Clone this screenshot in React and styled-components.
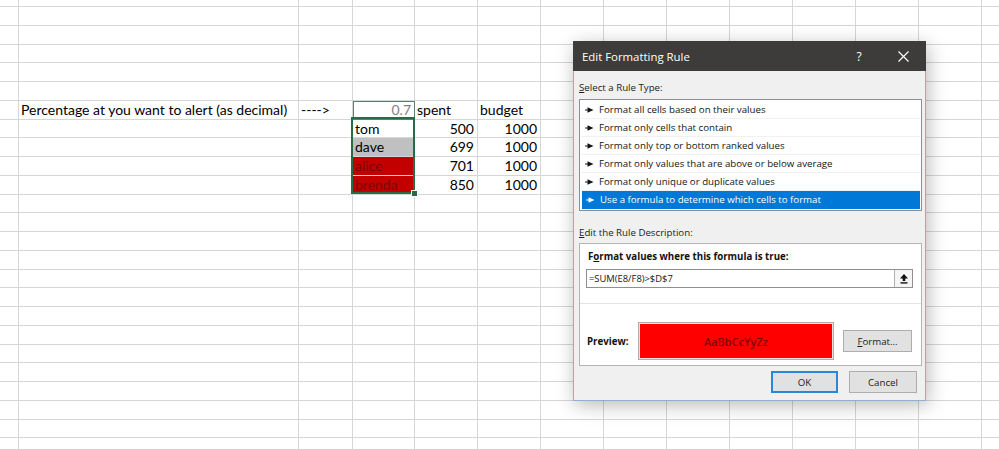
import styled, { createGlobalStyle } from "styled-components";

const COLS = [19, 280, 54, 62, 63, 63, 63, 63, 63, 63, 63, 63, 63, 63];
const ROW_H = 18.75;
const ROW_COUNT = 25;

const RED = { fill: "#c20000", color: "#800606" };

const content = {
  6: {
    1: { text: "Percentage at you want to alert (as decimal)" },
    2: { text: "---->" },
    3: { text: "0.7", align: "right", color: "#7f7f7f", outlined: true },
    4: { text: "spent" },
    5: { text: "budget" },
  },
  7: {
    3: { text: "tom" },
    4: { text: "500", align: "right" },
    5: { text: "1000", align: "right" },
  },
  8: {
    3: { text: "dave", fill: "#c0c0c0" },
    4: { text: "699", align: "right" },
    5: { text: "1000", align: "right" },
  },
  9: {
    3: { text: "alice", ...RED },
    4: { text: "701", align: "right" },
    5: { text: "1000", align: "right" },
  },
  10: {
    3: { text: "brenda", ...RED },
    4: { text: "850", align: "right" },
    5: { text: "1000", align: "right" },
  },
};

const ruleTypes = [
  "Format all cells based on their values",
  "Format only cells that contain",
  "Format only top or bottom ranked values",
  "Format only values that are above or below average",
  "Format only unique or duplicate values",
  "Use a formula to determine which cells to format",
];

const GlobalStyle = createGlobalStyle`
  html, body {
    margin: 0;
    padding: 0;
    background: #ffffff;
    overflow: hidden;
  }
`;

const Sheet = styled.div`
  position: relative;
  width: 999px;
  height: 449px;
  overflow: hidden;
  background: #ffffff;
  font-family: Lato, "Open Sans", sans-serif;
  font-size: 14px;
  color: #000000;
`;

const Row = styled.div`
  display: flex;
  height: ${(p) => p.$h}px;
`;

const Cell = styled.div`
  flex: none;
  box-sizing: border-box;
  width: ${(p) => p.$w}px;
  height: 100%;
  border-right: 1px solid #d6d6d6;
  border-bottom: 1px solid #d6d6d6;
  background: ${(p) => p.$fill || "transparent"};
  color: ${(p) => p.$color || "#000000"};
  text-align: ${(p) => p.$align || "left"};
  padding: 0 3px 0 2px;
  line-height: 17px;
  white-space: nowrap;
  overflow: visible;
  outline: ${(p) => (p.$outlined ? "1px solid #5f7f6e" : "none")};
  outline-offset: -1px;
`;

const Selection = styled.div`
  position: absolute;
  left: 351px;
  top: 117px;
  width: 64px;
  height: 77px;
  box-sizing: border-box;
  border: 2px solid #2a6b47;
  pointer-events: none;
`;

const FillHandle = styled.div`
  position: absolute;
  right: -5px;
  bottom: -5px;
  width: 5px;
  height: 5px;
  background: #2a6b47;
  border: 1px solid #ffffff;
`;

const Dialog = styled.div`
  position: absolute;
  left: 573px;
  top: 41px;
  width: 353px;
  height: 360px;
  box-sizing: border-box;
  display: flex;
  flex-direction: column;
  background: #f0f0f0;
  border: 1px solid #8eaed4;
  border-top: none;
  box-shadow: 2px 4px 18px rgba(0, 0, 0, 0.28);
  font-family: "Open Sans", "Noto Sans", sans-serif;
  font-size: 9.7px;
  color: #141414;
`;

const TitleBar = styled.div`
  display: flex;
  align-items: center;
  height: 30px;
  margin: 0 -1px;
  background: #3d3c3a;
  color: #ffffff;
`;

const Title = styled.div`
  flex: 1;
  padding-left: 9px;
  font-size: 11.4px;
`;

const TitleButton = styled.div`
  width: 46px;
  height: 100%;
  display: flex;
  align-items: center;
  justify-content: center;
  font-size: 12px;
  padding-left: ${(p) => p.$shift || 0}px;
  box-sizing: border-box;
`;

const Body = styled.div`
  display: flex;
  flex-direction: column;
  padding: 0 3px 0 5px;
`;

const Label = styled.div`
  line-height: 14px;
  margin-top: ${(p) => p.$top}px;
  color: #222222;
`;

const Key = styled.span`
  text-decoration: underline;
  text-underline-offset: 1px;
`;

const RuleList = styled.div`
  margin-top: 4px;
  height: 112px;
  box-sizing: border-box;
  border: 1px solid #8a8d93;
  padding: 1px;
  background: #ffffff;
`;

const RuleItem = styled.div`
  display: flex;
  align-items: center;
  height: 18px;
  box-sizing: border-box;
  padding-left: 4px;
  gap: 5px;
  margin-left: ${(p) => (p.$selected ? "1px" : "0")};
  background: ${(p) => (p.$selected ? "#0078d7" : "transparent")};
  color: ${(p) => (p.$selected ? "#ffffff" : "#141414")};
  border-bottom: 1px solid ${(p) => (p.$selected ? "#0078d7" : "#f1f1f1")};
`;

const DescBox = styled.div`
  margin-top: 3px;
  height: 123px;
  box-sizing: border-box;
  border: 1px solid #b4b4b4;
  background: #ffffff;
  display: flex;
  flex-direction: column;
`;

const DescTitle = styled.div`
  margin-top: 6px;
  padding-left: 8px;
  line-height: 14px;
  font-weight: 700;
  color: #111111;
`;

const FormulaInput = styled.div`
  display: flex;
  align-items: stretch;
  margin: 5px 8px 0 6px;
  height: 19px;
  box-sizing: border-box;
  border: 1px solid #8f8f8f;
  background: #ffffff;
`;

const FormulaText = styled.div`
  flex: 1;
  padding-left: 2px;
  line-height: 17px;
  font-size: 9.4px;
`;

const PickButton = styled.div`
  width: 18px;
  box-sizing: border-box;
  border-left: 1px solid #b0b0b0;
  background: #f5f5f5;
  display: flex;
  align-items: center;
  justify-content: center;
`;

const Divider = styled.div`
  margin-top: 15px;
  height: 1px;
  background: #e2e2e2;
`;

const PreviewRow = styled.div`
  display: flex;
  align-items: center;
  margin-top: 18px;
  padding-left: 7px;
`;

const PreviewLabel = styled.div`
  width: 51px;
  font-weight: 700;
  color: #111111;
`;

const PreviewSwatch = styled.div`
  width: 196px;
  height: 38px;
  box-sizing: border-box;
  border: 1px solid #b8a8a8;
  box-shadow: inset 0 0 0 1px #fbe0e0;
  background: #ff0000;
  color: #850000;
  display: flex;
  align-items: center;
  justify-content: center;
  font-size: 11px;
  font-weight: 600;
`;

const Button = styled.div`
  width: ${(p) => p.$w}px;
  height: 22px;
  box-sizing: border-box;
  display: flex;
  align-items: center;
  justify-content: center;
  background: #e1e1e1;
  border: ${(p) => (p.$primary ? "2px solid #2b86d8" : "1px solid #adadad")};
  color: #1a1a1a;
`;

const FormatButton = styled(Button)`
  margin-left: 9px;
`;

const ButtonRow = styled.div`
  display: flex;
  justify-content: flex-end;
  gap: 11px;
  margin-top: 5px;
  padding-right: 5px;
`;

function Arrow({ color }) {
  return (
    <svg width="9" height="6" viewBox="0 0 9 6">
      <line x1="0" y1="3" x2="3" y2="3" stroke={color} strokeWidth="1" />
      <polygon points="2.5,0.3 8.5,3 2.5,5.7" fill={color} />
    </svg>
  );
}

function CloseIcon() {
  return (
    <svg width="11" height="11" viewBox="0 0 11 11">
      <path d="M0.5 0.5 L10.5 10.5 M10.5 0.5 L0.5 10.5" stroke="#ffffff" strokeWidth="1.2" />
    </svg>
  );
}

function PickIcon() {
  return (
    <svg width="8" height="10" viewBox="0 0 8 10">
      <polygon points="4,0 8,4.5 5.3,4.5 5.3,7 2.7,7 2.7,4.5 0,4.5" fill="#111111" />
      <rect x="0.5" y="8.2" width="7" height="1.4" fill="#111111" />
    </svg>
  );
}

function Grid() {
  const rows = [];
  for (let r = 0; r < ROW_COUNT; r++) {
    const h = r === 0 ? 7 : ROW_H;
    const rowData = content[r] || {};
    rows.push(
      <Row key={r} $h={h}>
        {COLS.map((w, c) => {
          const cell = rowData[c];
          return (
            <Cell
              key={c}
              $w={w}
              $fill={cell?.fill}
              $color={cell?.color}
              $align={cell?.align}
              $outlined={cell?.outlined}
            >
              {cell?.text}
            </Cell>
          );
        })}
      </Row>
    );
  }
  return rows;
}

export default function App() {
  return (
    <>
      <GlobalStyle />
      <Sheet>
        <Grid />
        <Selection>
          <FillHandle />
        </Selection>

        <Dialog>
          <TitleBar>
            <Title>Edit Formatting Rule</Title>
            <TitleButton $shift={4}>?</TitleButton>
            <TitleButton>
              <CloseIcon />
            </TitleButton>
          </TitleBar>

          <Body>
            <Label $top={10}>
              <Key>S</Key>elect a Rule Type:
            </Label>
            <RuleList>
              {ruleTypes.map((t, i) => {
                const selected = i === ruleTypes.length - 1;
                return (
                  <RuleItem key={t} $selected={selected}>
                    <Arrow color={selected ? "#ffffff" : "#141414"} />
                    {t}
                  </RuleItem>
                );
              })}
            </RuleList>

            <Label $top={15}>
              <Key>E</Key>dit the Rule Description:
            </Label>
            <DescBox>
              <DescTitle>
                F<Key>o</Key>rmat values where this formula is true:
              </DescTitle>
              <FormulaInput>
                <FormulaText>=SUM(E8/F8)&gt;$D$7</FormulaText>
                <PickButton>
                  <PickIcon />
                </PickButton>
              </FormulaInput>
              <Divider />
              <PreviewRow>
                <PreviewLabel>Preview:</PreviewLabel>
                <PreviewSwatch>AaBbCcYyZz</PreviewSwatch>
                <FormatButton $w={69}>
                  <Key>F</Key>ormat...
                </FormatButton>
              </PreviewRow>
            </DescBox>

            <ButtonRow>
              <Button $w={67} $primary>
                OK
              </Button>
              <Button $w={68}>Cancel</Button>
            </ButtonRow>
          </Body>
        </Dialog>
      </Sheet>
    </>
  );
}
